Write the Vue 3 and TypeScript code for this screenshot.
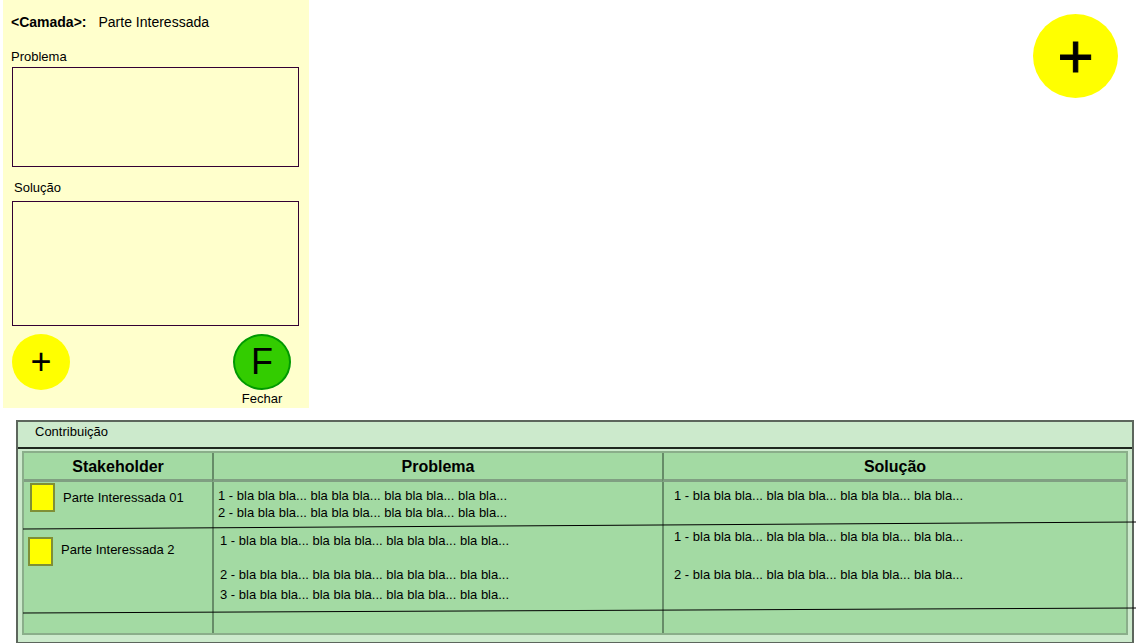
<script setup lang="ts">
import { ref } from 'vue'

interface Contribution {
  stakeholder: string
  problems: string[]
  solutions: string[]
  kind: string
}

const problem = ref<string>('')
const solution = ref<string>('')
const filler = 'bla bla bla... bla bla bla... bla bla bla... bla bla...'

const contributions: Contribution[] = [
  {
    stakeholder: 'Parte Interessada 01',
    problems: [`1 - ${filler}`, `2 - ${filler}`],
    solutions: [`1 - ${filler}`],
    kind: 'compact',
  },
  {
    stakeholder: 'Parte Interessada 2',
    problems: [`1 - ${filler}`, `2 - ${filler}`, `3 - ${filler}`],
    solutions: [`1 - ${filler}`, `2 - ${filler}`],
    kind: 'roomy',
  },
]
</script>

<template>
  <main class="page">
    <div class="top">
      <form class="panel" @submit.prevent>
        <h1 class="title"><b>&lt;Camada&gt;:</b><span>Parte Interessada</span></h1>
        <label class="label" for="problem">Problema</label>
        <textarea id="problem" v-model="problem" class="box"></textarea>
        <label class="label second" for="solution">Solução</label>
        <textarea id="solution" v-model="solution" class="box tall"></textarea>
        <div class="actions">
          <button type="button" class="round add" aria-label="Adicionar">+</button>
          <div class="close">
            <button id="close" type="button" class="round finish">F</button>
            <label for="close">Fechar</label>
          </div>
        </div>
      </form>
      <button type="button" class="fab" aria-label="Adicionar">+</button>
    </div>

    <section class="contrib">
      <h2 class="heading">Contribuição</h2>
      <div class="sheet">
        <table class="grid">
          <colgroup>
            <col class="c1" />
            <col class="c2" />
            <col />
          </colgroup>
          <thead>
            <tr>
              <th scope="col">Stakeholder</th>
              <th scope="col">Problema</th>
              <th scope="col">Solução</th>
            </tr>
          </thead>
          <tbody>
            <tr v-for="row in contributions" :key="row.stakeholder" :class="row.kind">
              <td>
                <div class="who"><i class="note"></i><span>{{ row.stakeholder }}</span></div>
              </td>
              <td>
                <ul class="problems">
                  <li v-for="item in row.problems" :key="item">{{ item }}</li>
                </ul>
              </td>
              <td>
                <ul class="solutions">
                  <li v-for="item in row.solutions" :key="item">{{ item }}</li>
                </ul>
              </td>
            </tr>
            <tr class="blank">
              <td></td>
              <td></td>
              <td></td>
            </tr>
          </tbody>
        </table>
        <svg class="rules" viewBox="0 0 1113 184" preserveAspectRatio="none" aria-hidden="true">
          <line x1="0" y1="78" x2="1113" y2="71" />
          <line x1="0" y1="162" x2="1113" y2="157" />
        </svg>
      </div>
    </section>
  </main>
</template>

<style>
body {
  margin: 0;
  background: #fff;
  overflow-x: hidden;
}
</style>

<style scoped>
.page {
  font: 13px/17px "Liberation Sans", Arial, sans-serif;
  color: #000;
}
.page * {
  box-sizing: border-box;
}
.top {
  display: flex;
  justify-content: space-between;
  align-items: flex-start;
  padding: 0 18px 0 3px;
}
.panel {
  width: 306px;
  padding: 14px 10px 1px 8px;
  background: #ffffcc;
}
.title {
  display: flex;
  gap: 12px;
  margin: 0 0 17px;
  font-size: 14px;
  line-height: 17px;
  font-weight: 400;
}
.label {
  display: block;
  margin-bottom: 2px;
}
.second {
  margin: 12px 0 5px;
  padding-left: 3px;
}
.box {
  display: block;
  width: calc(100% - 1px);
  height: 100px;
  margin-left: 1px;
  padding: 4px;
  border: 1px solid #330033;
  border-radius: 0;
  background: transparent;
  font: inherit;
  resize: none;
  outline: none;
}
.tall {
  height: 125px;
}
.actions {
  display: flex;
  justify-content: space-between;
  align-items: flex-start;
  padding: 8px 8px 0 1px;
}
.round,
.fab {
  display: flex;
  align-items: center;
  justify-content: center;
  padding: 0;
  border: 0;
  border-radius: 50%;
  background: #ffff00;
  color: #000;
  font-family: inherit;
}
.round {
  width: 58px;
  height: 56px;
  font-size: 36px;
  line-height: 40px;
}
.finish {
  border: 2px solid #009900;
  background: #33cc00;
}
.close {
  display: flex;
  flex-direction: column;
  align-items: center;
}
.fab {
  width: 85px;
  height: 84px;
  margin-top: 14px;
  font-size: 62px;
  line-height: 70px;
  -webkit-text-stroke: 1px #000;
}
.contrib {
  margin: 12px 2px 0 16px;
  border: 2px solid #5c665c;
  border-bottom-width: 1px;
  background: #cceacc;
}
.heading {
  margin: 0;
  padding: 1px 17px 7px;
  border-bottom: 2px solid #1f281f;
  font-size: 13px;
  line-height: 17px;
  font-weight: 400;
}
.sheet {
  position: relative;
  padding: 2px 4px 7px;
}
.grid {
  width: 100%;
  table-layout: fixed;
  border: 2px solid #8aae8a;
  border-spacing: 0;
  background: #a3daa3;
}
.c1 {
  width: 188px;
}
.c2 {
  width: 450px;
}
th,
td {
  padding: 0;
  vertical-align: top;
}
th + th,
td + td {
  border-left: 2px solid #668c68;
}
th {
  height: 29px;
  padding-top: 3px;
  border-bottom: 3px solid #809f82;
  font-size: 16px;
  line-height: 22px;
}
.compact td {
  height: 45px;
}
.roomy td {
  height: 85px;
}
.blank td {
  height: 21px;
}
ul {
  display: flex;
  flex-direction: column;
  margin: 0;
  padding: 5px 4px;
  list-style: none;
}
.solutions {
  padding-left: 10px;
}
.roomy .problems {
  padding-left: 6px;
}
.roomy .problems li:nth-child(2) {
  margin: 17px 0 3px;
}
.roomy .solutions {
  gap: 21px;
  padding-top: 1px;
}
.who {
  display: flex;
  align-items: center;
  gap: 8px;
  padding: 1px 6px;
}
.roomy .who {
  align-items: flex-start;
  padding: 10px 4px;
}
.roomy .who span {
  padding-top: 4px;
}
.note {
  width: 25px;
  height: 29px;
  border: 2px solid #7f8f36;
  background: #ffff00;
}
.rules {
  position: absolute;
  top: 2px;
  left: 5px;
  width: calc(100% - 1px);
  height: calc(100% - 9px);
  overflow: visible;
  pointer-events: none;
}
.rules line {
  stroke: #000;
  stroke-width: 1px;
  vector-effect: non-scaling-stroke;
}
</style>
